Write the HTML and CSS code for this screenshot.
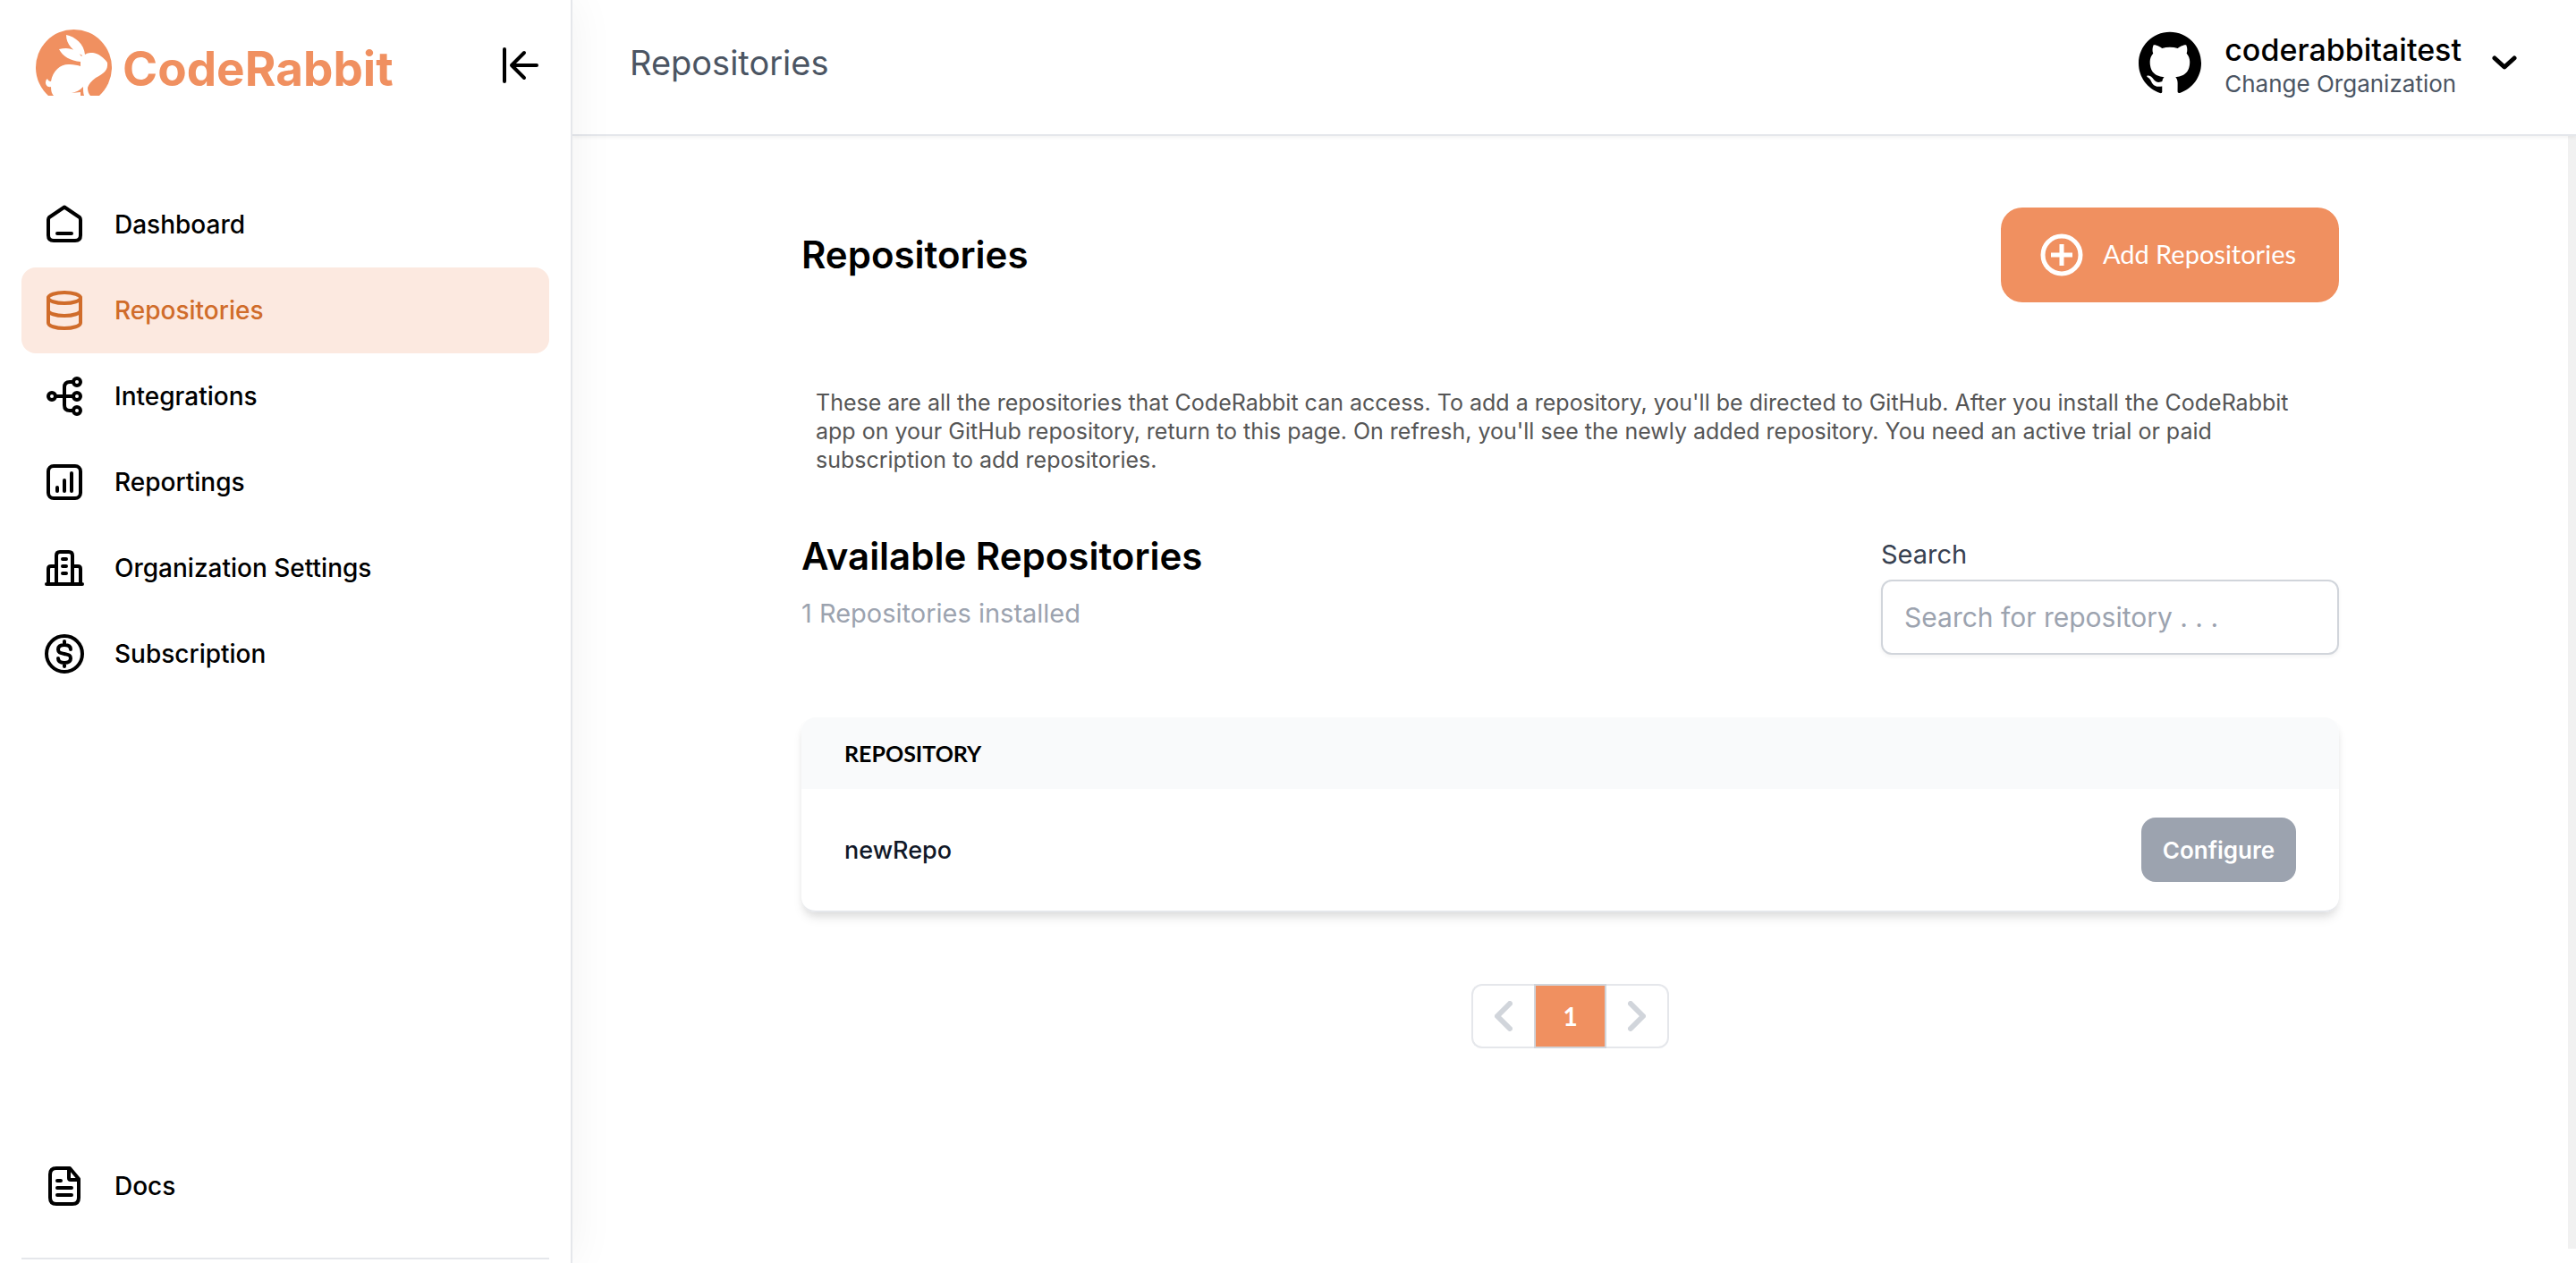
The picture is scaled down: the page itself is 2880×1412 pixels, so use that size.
FILE: index.html
```html
<!DOCTYPE html>
<html lang="en">
<head>
<meta charset="utf-8">
<meta name="viewport" content="width=device-width, initial-scale=1">
<title>Repositories - CodeRabbit</title>
<link rel="stylesheet" href="styles.css">
</head>
<body>
<div class="app">
  <aside class="sidebar">
    <div class="sidebar-head">
      <a class="brand" href="#">
        <svg class="brand-mark" viewBox="0 0 85 75" aria-hidden="true">
          <path fill="#f09060" d="M14 75A42.500 42.500 0 1 1 71 75Z"/>
          <path fill="#fff" d="M34 7C44 9 54 17 55 29C58 27 61 27 64 27C70 28 76 32 80 38C81 47 76 50 67 55C62 59 59 62 58 66C58 70 59 73 61 75H54C53 72 53 69 53 65C49 69 45 71 40 72L50 71V75H20C18 73 17 70 17 65C13 66 11 63 11 60Q11 57 13 56Q14 59 17 59C19 46 29 39 38 40C43 40 47 41 50 42V37C39 36 30 31 26 23C38 20 46 24 51 31L52 30C42 25 34 18 34 7Z"/>
        </svg>
        <span class="brand-name">CodeRabbit</span>
      </a>
      <button class="icon-button" type="button" aria-label="Collapse sidebar">
        <svg class="collapse-icon" viewBox="0 0 48 48" fill="none" stroke="currentColor" stroke-width="4" stroke-linecap="round" stroke-linejoin="round" aria-hidden="true"><path d="M6 6v36M42 24H14M28 10L14 24l14 14"/></svg>
      </button>
    </div>
    <nav class="nav">
      <a class="nav-item" href="#"><svg class="nav-icon" viewBox="0 0 48 48" aria-hidden="true"><path d="M24 4.500L41 16q1 1 1 3v17q0 6-6 6H12q-6 0-6-6V19q0-2 1-3zM16 34h16"/></svg>Dashboard</a>
      <a class="nav-item active" href="#" aria-current="page"><svg class="nav-icon" viewBox="0 0 48 48" aria-hidden="true"><ellipse cx="24" cy="10" rx="18" ry="6"/><path d="M6 10v28c0 3.300 8 6 18 6s18-2.700 18-6V10M6 24c0 3.300 8 6 18 6s18-2.700 18-6"/></svg>Repositories</a>
      <a class="nav-item" href="#"><svg class="nav-icon" viewBox="0 0 48 48" aria-hidden="true"><circle cx="10" cy="24" r="4"/><circle cx="38" cy="8" r="4"/><circle cx="38" cy="24" r="4"/><circle cx="38" cy="40" r="4"/><path d="M14 24h20M34 8h-4q-6 0-6 6v20q0 6 6 6h4"/></svg>Integrations</a>
      <a class="nav-item" href="#"><svg class="nav-icon" viewBox="0 0 48 48" aria-hidden="true"><rect x="6" y="6" width="36" height="36" rx="6"/><path d="M16 30v4M24 22v12M32 14v20"/></svg>Reportings</a>
      <a class="nav-item" href="#"><svg class="nav-icon" viewBox="0 0 48 48" aria-hidden="true"><path d="M4 42h40M15 42V10q0-4 4-4h10q4 0 4 4v32M6 42V25q0-3 3-3h6M33 22h6q3 0 3 3v17M22 14h4M22 22h4M22 30h4"/></svg>Organization Settings</a>
      <a class="nav-item" href="#"><svg class="nav-icon" viewBox="0 0 48 48" aria-hidden="true"><circle cx="24" cy="24" r="20"/><path d="M24 10v4M24 34v4M31 19c0-4-3-5-7-5s-7 1-7 5 3 4 7 5 7 1 7 5-3 5-7 5-7-1-7-5"/></svg>Subscription</a>
    </nav>
    <div class="sidebar-foot">
      <a class="nav-item" href="#"><svg class="nav-icon" viewBox="0 0 48 48" aria-hidden="true"><path d="M30 4H15q-7 0-7 7v26q0 7 7 7h18q7 0 7-7V16zM29 5v10q0 2 2 2h8M16 18h4M16 26h16M16 34h16"/></svg>Docs</a>
    </div>
  </aside>

  <div class="page">
    <header class="topbar">
      <span class="crumb">Repositories</span>
      <button class="org" type="button">
        <svg class="org-logo" viewBox="0 0 24 24" fill="currentColor" aria-hidden="true"><path d="M12 .297c-6.630 0-12 5.373-12 12 0 5.303 3.438 9.800 8.205 11.385.6.113.82-.258.82-.577 0-.285-.01-1.040-.015-2.040-3.338.724-4.042-1.610-4.042-1.610C4.422 18.070 3.633 17.700 3.633 17.700c-1.087-.744.084-.729.084-.729 1.205.084 1.838 1.236 1.838 1.236 1.070 1.835 2.809 1.305 3.495.998.108-.776.417-1.305.76-1.605-2.665-.3-5.466-1.332-5.466-5.930 0-1.310.465-2.380 1.235-3.220-.135-.303-.54-1.523.105-3.176 0 0 1.005-.322 3.300 1.230.96-.267 1.980-.399 3-.405 1.020.006 2.040.138 3 .405 2.280-1.552 3.285-1.230 3.285-1.230.645 1.653.24 2.873.12 3.176.765.84 1.230 1.910 1.230 3.220 0 4.610-2.805 5.625-5.475 5.920.42.36.81 1.096.81 2.220 0 1.606-.015 2.896-.015 3.286 0 .315.21.69.825.57C20.565 22.092 24 17.592 24 12.297c0-6.627-5.373-12-12-12"/></svg>
        <span class="org-text">
          <span class="org-name">coderabbitaitest</span>
          <span class="org-action">Change Organization</span>
        </span>
        <svg class="org-chevron" viewBox="0 0 28 16" fill="none" stroke="currentColor" stroke-width="5" stroke-linecap="round" stroke-linejoin="round" aria-hidden="true"><path d="M3 3l11 10L25 3"/></svg>
      </button>
    </header>

    <main class="content">
      <div class="title-row">
        <h1 class="heading">Repositories</h1>
        <button class="add-button" type="button">
          <svg class="add-icon" viewBox="0 0 48 48" fill="none" stroke="currentColor" stroke-width="5" aria-hidden="true"><circle cx="24" cy="24" r="21"/><path d="M24 12v24M12 24h24"/></svg>
          <span class="add-label">Add Repositories</span>
        </button>
      </div>

      <p class="intro">These are all the repositories that CodeRabbit can access. To add a repository, you'll be directed to GitHub. After you install the CodeRabbit app on your GitHub repository, return to this page. On refresh, you'll see the newly added repository. You need an active trial or paid subscription to add repositories.</p>

      <div class="list-head">
        <div class="list-title">
          <h2 class="heading">Available Repositories</h2>
          <p class="count">1 Repositories installed</p>
        </div>
        <div class="search">
          <label class="search-label" for="repo-search">Search</label>
          <input class="search-input" id="repo-search" type="text" placeholder="Search for repository . . .">
        </div>
      </div>

      <table class="repos">
        <thead>
          <tr><th scope="col" colspan="2">REPOSITORY</th></tr>
        </thead>
        <tbody>
          <tr>
            <td>newRepo</td>
            <td class="actions"><button class="configure" type="button">Configure</button></td>
          </tr>
        </tbody>
      </table>

      <nav class="pager" aria-label="Pagination">
        <button class="pager-step prev" type="button" aria-label="Previous page"><svg class="pager-icon" viewBox="0 0 20 34" aria-hidden="true"><path d="M17 3L3 17l14 14"/></svg></button>
        <button class="pager-page" type="button" aria-current="page">1</button>
        <button class="pager-step next" type="button" aria-label="Next page"><svg class="pager-icon" viewBox="0 0 20 34" aria-hidden="true"><path d="M3 3l14 14L3 31"/></svg></button>
      </nav>
    </main>
  </div>
</div>
</body>
</html>
```
FILE: styles.css
```css
:root {
  --orange: #f09060;
  --line: #e5e7eb;
  --grey: #9ca3af;
  --slate: #4b5563;
}

* { box-sizing: border-box; }

body {
  margin: 0;
  background: #fff;
  color: #000;
  font-family: Inter, "Liberation Sans", sans-serif;
  font-size: 28px;
}

h1, h2, p { margin: 0; }

button, input { font: inherit; color: inherit; }
button { border: 0; padding: 0; background: none; cursor: pointer; }
a { color: inherit; text-decoration: none; }
svg { display: block; flex: none; }

.app {
  display: grid;
  grid-template-columns: 640px minmax(0, 1fr);
  min-height: 100vh;
}

/* Sidebar */
.sidebar {
  position: relative;
  z-index: 1;
  display: flex;
  flex-direction: column;
  padding: 32px 24px 4px;
  background: #fff;
  border-right: 2px solid var(--line);
  box-shadow: 0 0 48px rgba(0, 0, 0, 0.06);
}

.sidebar-head {
  display: flex;
  justify-content: space-between;
  align-items: flex-start;
  height: 171px;
  padding: 0 8px 0 16px;
}

.brand {
  display: flex;
  align-items: flex-start;
  gap: 12px;
  color: var(--orange);
}
.brand-mark { width: 85px; height: 75px; }
.brand-name {
  padding-top: 13px;
  font-size: 53px;
  line-height: 64px;
  font-weight: 700;
}

.icon-button { padding-top: 17px; }
.collapse-icon { width: 48px; height: 48px; }

.nav-item {
  display: flex;
  align-items: center;
  gap: 32px;
  height: 96px;
  padding: 0 24px;
  border-radius: 16px;
  font-weight: 500;
}
.nav-item.active { background: #fce9e0; color: #d06c2a; }
.nav-icon {
  width: 48px;
  height: 48px;
  fill: none;
  stroke: currentColor;
  stroke-width: 4;
  stroke-linecap: round;
  stroke-linejoin: round;
}

.sidebar-foot {
  margin-top: auto;
  padding-bottom: 32px;
  border-bottom: 2px solid var(--line);
}

/* Top bar */
.page { display: flex; flex-direction: column; padding-bottom: 16px; }

.topbar {
  position: relative;
  display: flex;
  justify-content: space-between;
  align-items: center;
  height: 152px;
  padding: 0 66px 10px 64px;
  background: #fff;
  border-bottom: 2px solid var(--line);
  box-shadow: 0 2px 4px rgba(0, 0, 0, 0.05);
}
.crumb { font-size: 38px; color: var(--slate); }

.org { display: flex; align-items: center; gap: 26px; text-align: left; }
.org-logo { width: 70px; height: 70px; }
.org-text { display: flex; flex-direction: column; padding-top: 8px; }
.org-name { font-size: 34px; line-height: 40px; font-weight: 500; }
.org-action { font-size: 26px; line-height: 36px; color: var(--slate); }
.org-chevron { width: 28px; height: 16px; margin-left: 8px; }

/* Content */
.content {
  flex: 1;
  padding: 80px 256px;
  border-right: 9px solid #f1f1f1;
}

.title-row { display: flex; justify-content: space-between; align-items: center; }
.heading { font-size: 42px; line-height: 56px; font-weight: 600; }

.add-button {
  display: flex;
  align-items: center;
  gap: 22px;
  height: 106px;
  padding: 0 48px 0 44px;
  border-radius: 24px;
  background: var(--orange);
  color: #fff;
  font-family: Lato, "Open Sans", sans-serif;
  font-size: 29px;
}
.add-icon { width: 48px; height: 48px; }
.add-label { padding-bottom: 4px; }

.intro {
  margin-top: 96px;
  padding: 0 16px;
  font-size: 25px;
  line-height: 32px;
  color: #555;
}

.list-head {
  display: flex;
  justify-content: space-between;
  align-items: flex-start;
  margin-top: 64px;
}
.list-title { display: flex; flex-direction: column; gap: 16px; }
.count { font-size: 29px; line-height: 40px; color: var(--grey); }

.search { display: flex; flex-direction: column; gap: 8px; width: 512px; padding-top: 6px; }
.search-label { font-size: 29px; line-height: 40px; color: #374151; }
.search-input {
  height: 84px;
  padding: 0 24px;
  border: 2px solid #d1d5db;
  border-radius: 12px;
  background: #fff;
  box-shadow: 0 2px 4px rgba(0, 0, 0, 0.05);
  font-size: 30px;
}
.search-input::placeholder { color: var(--grey); opacity: 1; }

.repos {
  width: 100%;
  margin-top: 70px;
  border-spacing: 0;
  border-radius: 16px;
  border-bottom: 2px solid var(--line);
  overflow: hidden;
  box-shadow: 0 8px 12px -2px rgba(0, 0, 0, 0.1), 0 4px 8px -2px rgba(0, 0, 0, 0.06);
}
.repos th {
  height: 80px;
  padding: 0 48px;
  background: #f9fafb;
  font-family: Lato, "Open Sans", sans-serif;
  font-size: 25px;
  font-weight: 700;
  text-align: left;
}
.repos td {
  height: 136px;
  padding: 0 48px;
  font-size: 27px;
  font-weight: 500;
  color: #111827;
}
.repos .actions { text-align: right; }

.configure {
  height: 72px;
  padding: 0 24px;
  border-radius: 16px;
  background: var(--grey);
  color: #fff;
  font-size: 26px;
  font-weight: 600;
}

.pager { display: flex; justify-content: center; margin-top: 80px; }
.pager-step {
  display: grid;
  place-items: center;
  width: 70px;
  height: 72px;
  border: 2px solid var(--line);
}
.prev { border-right: 0; border-radius: 12px 0 0 12px; }
.next { border-left: 0; border-radius: 0 12px 12px 0; }
.pager-icon {
  width: 20px;
  height: 34px;
  fill: none;
  stroke: #d1d5db;
  stroke-width: 6;
  stroke-linecap: round;
  stroke-linejoin: round;
}
.pager-page {
  width: 81px;
  height: 72px;
  border: 2px solid #d1d5db;
  background: var(--orange);
  color: #fff;
  font-family: Lato, "Open Sans", sans-serif;
  font-weight: 700;
}
```
